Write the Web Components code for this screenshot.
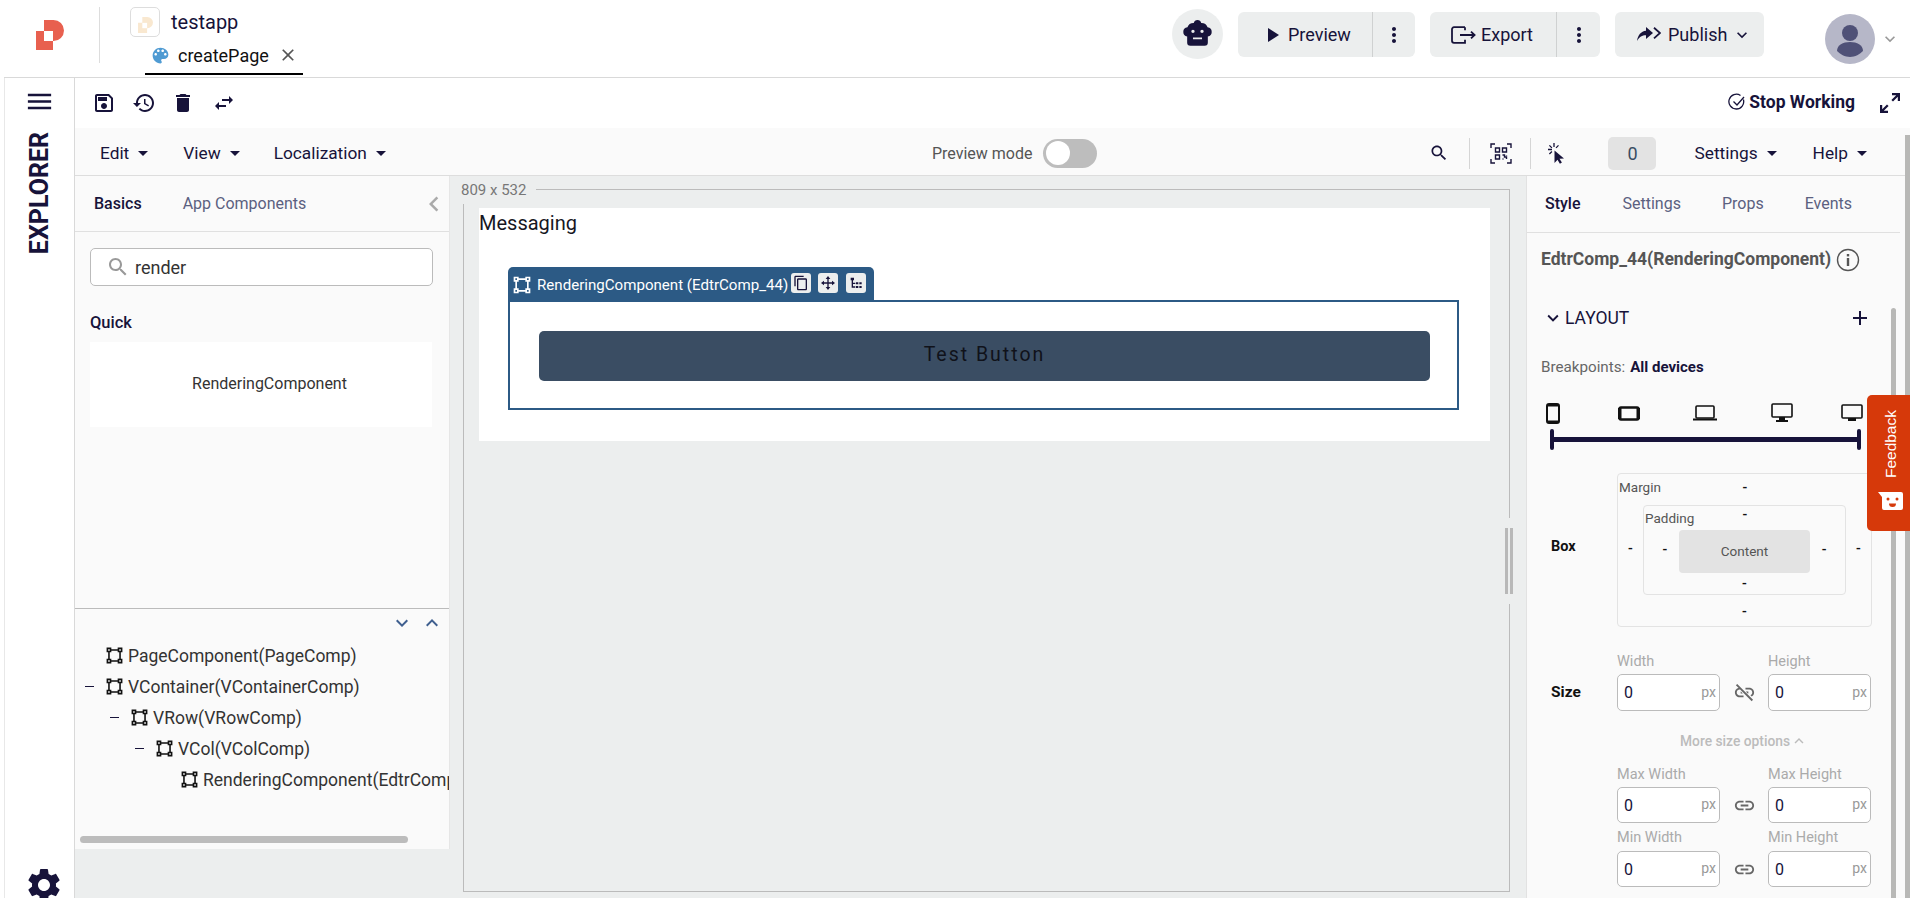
<!DOCTYPE html>
<html lang="en"><head><meta charset="utf-8"><title>testapp</title>
<style>
html,body{margin:0;padding:0;height:898px;overflow:hidden;background:#fff;font-family:Roboto,"Liberation Sans",sans-serif;color:#17133a}
</style></head>
<body>
<app-shell></app-shell>
<script>
const P={
save:'M17 3H5c-1.11 0-2 .9-2 2v14c0 1.1.89 2 2 2h14c1.1 0 2-.9 2-2V7l-4-4zm2 16H5V5h11.17L19 7.83V19zm-7-7c-1.66 0-3 1.34-3 3s1.34 3 3 3 3-1.34 3-3-1.34-3-3-3zM6 6h9v4H6z',
history:'M13 3c-4.97 0-9 4.03-9 9H1l3.89 3.89.07.14L9 12H6c0-3.87 3.13-7 7-7s7 3.13 7 7-3.13 7-7 7c-1.93 0-3.68-.79-4.94-2.06l-1.42 1.42C8.27 19.99 10.51 21 13 21c4.97 0 9-4.03 9-9s-4.03-9-9-9zm-1 5v5l4.28 2.54.72-1.21-3.5-2.08V8H12z',
del:'M6 19c0 1.1.9 2 2 2h8c1.1 0 2-.9 2-2V7H6v12zM19 4h-3.5l-1-1h-5l-1 1H5v2h14V4z',
swap:'M6.99 11L3 15l3.99 4v-3H14v-2H6.99v-3zM21 9l-3.99-4v3H10v2h7.01v3L21 9z',
menu:'M3 18h18v-2H3v2zm0-5h18v-2H3v2zm0-7v2h18V6H3z',
gear:'M19.14 12.94c.04-.3.06-.61.06-.94 0-.32-.02-.64-.07-.94l2.03-1.58c.18-.14.23-.41.12-.61l-1.92-3.32c-.12-.22-.37-.29-.59-.22l-2.39.96c-.5-.38-1.03-.7-1.62-.94l-.36-2.54c-.04-.24-.24-.41-.48-.41h-3.84c-.24 0-.43.17-.47.41l-.36 2.54c-.59.24-1.13.57-1.62.94l-2.39-.96c-.22-.08-.47 0-.59.22L2.74 8.87c-.12.21-.08.47.12.61l2.03 1.58c-.05.3-.09.63-.09.94s.02.64.07.94l-2.03 1.58c-.18.14-.23.41-.12.61l1.92 3.32c.12.22.37.29.59.22l2.39-.96c.5.38 1.03.7 1.62.94l.36 2.54c.05.24.24.41.48.41h3.84c.24 0 .44-.17.47-.41l.36-2.54c.59-.24 1.13-.56 1.62-.94l2.39.96c.22.08.47 0 .59-.22l1.92-3.32c.12-.22.07-.47-.12-.61l-2.01-1.58zM12 15.6c-1.98 0-3.6-1.62-3.6-3.6s1.62-3.6 3.6-3.6 3.6 1.62 3.6 3.6-1.62 3.6-3.6 3.6z',
search:'M15.5 14h-.79l-.28-.27C15.41 12.59 16 11.11 16 9.5 16 5.91 13.09 3 9.5 3S3 5.91 3 9.5 5.91 16 9.5 16c1.61 0 3.09-.59 4.23-1.57l.27.28v.79l5 4.99L20.49 19l-4.99-5zm-6 0C7.01 14 5 11.99 5 9.5S7.01 5 9.5 5 14 7.01 14 9.5 11.99 14 9.5 14z',
play:'M8 5v14l11-7z',
more:'M12 8c1.1 0 2-.9 2-2s-.9-2-2-2-2 .9-2 2 .9 2 2 2zm0 2c-1.1 0-2 .9-2 2s.9 2 2 2 2-.9 2-2-.9-2-2-2zm0 6c-1.1 0-2 .9-2 2s.9 2 2 2 2-.9 2-2-.9-2-2-2z',
palette:'M12 3c-4.97 0-9 4.03-9 9s4.03 9 9 9c.83 0 1.5-.67 1.5-1.5 0-.39-.15-.74-.39-1.01-.23-.26-.38-.61-.38-.99 0-.83.67-1.5 1.5-1.5H16c2.76 0 5-2.24 5-5 0-4.42-4.03-8-9-8zm-5.5 9c-.83 0-1.5-.67-1.5-1.5S5.67 9 6.5 9 8 9.67 8 10.5 7.33 12 6.5 12zm3-4C8.67 8 8 7.33 8 6.5S8.67 5 9.5 5s1.5.67 1.5 1.5S10.33 8 9.5 8zm5 0c-.83 0-1.5-.67-1.5-1.5S13.67 5 14.5 5s1.5.67 1.5 1.5S15.33 8 14.5 8zm3 4c-.83 0-1.5-.67-1.5-1.5S16.67 9 17.5 9s1.5.67 1.5 1.5-.67 1.5-1.5 1.5z',
close:'M19 6.41L17.59 5 12 10.59 6.41 5 5 6.41 10.59 12 5 17.59 6.41 19 12 13.41 17.59 19 19 17.59 13.41 12z',
link:'M3.9 12c0-1.71 1.39-3.1 3.1-3.1h4V7H7c-2.76 0-5 2.24-5 5s2.24 5 5 5h4v-1.9H7c-1.71 0-3.1-1.39-3.1-3.1zM8 13h8v-2H8v2zm9-6h-4v1.9h4c1.71 0 3.1 1.39 3.1 3.1s-1.39 3.1-3.1 3.1h-4V17h4c2.76 0 5-2.24 5-5s-2.24-5-5-5z',
linkoff:'M3.9 12c0-1.71 1.39-3.1 3.1-3.1h1.5L6.6 7H7c-2.76 0-5 2.24-5 5s2.24 5 5 5h4v-1.9H7c-1.71 0-3.1-1.39-3.1-3.1zM17 7h-4v1.9h4c1.71 0 3.1 1.39 3.1 3.1 0 1.3-.8 2.4-1.9 2.86l1.4 1.4C21 15.4 22 13.8 22 12c0-2.76-2.24-5-5-5zM4.4 3.1L3 4.5l16.5 16.5 1.4-1.4zM8 11v2h2.2l-2-2zM16 11h-2.6l2 2h.6z',
vsq:'M2,2H8V4H16V2H22V8H20V16H22V22H16V20H8V22H2V16H4V8H2V2M16,8V6H8V8H6V16H8V18H16V16H18V8H16M4,4V6H6V4H4M18,4V6H20V4H18M4,18V20H6V18H4M18,18V20H20V18H18Z',
down:'M7.41 8.59L12 13.17l4.59-4.58L18 10l-6 6-6-6z',
up:'M7.41 15.41L12 10.83l4.59 4.58L18 14l-6-6-6 6z',
left:'M15.41 7.41L14 6l-6 6 6 6 1.41-1.41L10.83 12z',
plus:'M19 13h-6v6h-2v-6H5v-2h6V5h2v6h6v2z',
copy:'M16 1H4c-1.1 0-2 .9-2 2v14h2V3h12V1zm3 4H8c-1.1 0-2 .9-2 2v14c0 1.1.9 2 2 2h11c1.1 0 2-.9 2-2V7c0-1.1-.9-2-2-2zm0 16H8V7h11v14z',
move:'M11 6h2v5h5V8.500L22.500 12 18 15.500V13h-5v5h2.500L12 22.500 8.500 18H11v-5H6v2.500L1.500 12 6 8.500V11h5V6H8.500L12 1.500 15.500 6H13v0z',
tree:'M4 4h5v4H4zM5.500 8h2v11h-2zM7 11.500h4v2H7zM7 17h4v2H7zM12 11h3.500v3H12zM17 11h3.500v3H17zM12 16.500h3.500v3H12zM17 16.500h3.500v3H17z',
robot:'M12 1.500a3 3 0 0 0-2.900 2.300H9A5 5 0 0 0 4.200 7.200 3.600 3.600 0 0 0 1 10.800a3.600 3.600 0 0 0 3 3.500V19a2.500 2.500 0 0 0 2.500 2.500h11A2.500 2.500 0 0 0 20 19v-4.700a3.600 3.600 0 0 0 3-3.500 3.600 3.600 0 0 0-3.200-3.600A5 5 0 0 0 15 3.800h-.1A3 3 0 0 0 12 1.500zM8.500 9a1.300 1.300 0 1 1 0 2.600 1.300 1.300 0 0 1 0-2.600zm7 0a1.300 1.300 0 1 1 0 2.600 1.300 1.300 0 0 1 0-2.600zM8.500 15h7v1.400h-7z',
};
class XIcon extends HTMLElement{
 connectedCallback(){
  if(this.shadowRoot)return;
  const s=this.getAttribute('size')||24,c=this.getAttribute('color')||'currentColor',n=this.getAttribute('name');
  const r=this.attachShadow({mode:'open'});
  r.innerHTML=`<style>:host{display:inline-flex;flex:none;width:${s}px;height:${s}px}svg{display:block;width:100%;height:100%}</style><svg viewBox="0 0 24 24" fill="${c}"><path d="${P[n]||''}"/></svg>`;
 }
}
customElements.define('x-icon',XIcon);
function def(name,css,html){
 customElements.define(name,class extends HTMLElement{
  connectedCallback(){
   if(this.shadowRoot)return;
   const r=this.attachShadow({mode:'open'});
   const h=typeof html==='function'?html(this):html;
   r.innerHTML=`<style>${css}</style>${h}`;
  }
 });
}
const LOGO=(a,b)=>`<svg viewBox="0 0 28 30" width="100%" height="100%"><path fill="${a}" d="M8 0h9.500a10.500 10.500 0 0 1 0 21H17v9H0V11h8z"/><rect fill="${b}" x="8" y="11" width="9" height="10"/></svg>`;
const caret=`<svg width="10" height="5" viewBox="0 0 10 5" style="display:block;flex:none"><path d="M0 0h10L5 5z" fill="currentColor"/></svg>`;

def('split-btn',`:host{display:flex;height:45px;background:#eceeee;border-radius:6px;font-size:18px;color:#17133a;align-items:stretch;flex:none;margin-top:2px}
.m{display:flex;align-items:center;flex:none;box-sizing:border-box}
.d{width:1px;background:#cfd1d1;flex:none}.k{display:flex;align-items:center;justify-content:center;flex:1}`,
 e=>`<div class="m" style="width:${e.getAttribute('main')}px;padding-left:${e.getAttribute('pad')}px"><slot></slot></div><div class="d"></div><div class="k"><x-icon name="more" size="24"></x-icon></div>`);

def('top-bar',`:host{display:flex;height:77px;border-bottom:1px solid #d9d9d9;align-items:stretch;background:#fff}
.logo{width:28px;height:30px;margin:20px 0 0 32px;flex:none}
.div{width:1px;height:56px;background:#ddd;margin:7px 0 0 35px;flex:none}
.app{margin-left:30px;padding-top:7px;display:flex;flex-direction:column}
.r1{display:flex;align-items:center;height:30px;gap:11px;font-size:20px}
.ai{width:28px;height:28px;border:1px solid #ddd;border-radius:5px;display:flex;align-items:center;justify-content:center}
.ai div{width:15px;height:16px}
.tab{margin-left:15px;width:158px;height:38px;box-sizing:border-box;border-bottom:2px solid #000;display:flex;align-items:center;font-size:18px;color:#111;padding-left:5px}
.tab span{margin-left:7px}
.tab .x{margin-left:9px}
.right{margin-left:auto;display:flex;align-items:center;padding:0 10px 10px 0;gap:15px}
.bot{width:51px;height:50px;border-radius:50%;background:#eceeee;display:flex;align-items:center;justify-content:center;flex:none}
.ava{width:50px;height:50px;border-radius:50%;background:#b6b7c8;margin-left:46px;flex:none}
.ch{margin-left:-10px}
.pub{display:flex;align-items:center;width:149px;height:45px;box-sizing:border-box;padding-left:22px;background:#eceeee;border-radius:6px;font-size:18px;flex:none;margin-top:2px}
`,`<div class="logo">${LOGO('#e8604f','#fff')}</div><div class="div"></div>
<div class="app"><div class="r1"><div class="ai"><div>${LOGO('#f9e8d0','#fff')}</div></div><span>testapp</span></div>
<div class="tab"><x-icon name="palette" size="21" color="#4f9bd3"></x-icon><span>createPage</span><x-icon class="x" name="close" size="20" color="#555"></x-icon></div></div>
<div class="right"><div class="bot"><x-icon name="robot" size="31"></x-icon></div>
<split-btn style="width:177px" main="134" pad="22"><x-icon name="play" size="24"></x-icon><span style="margin-left:4px">Preview</span></split-btn>
<split-btn style="width:170px" main="126" pad="21"><svg width="26" height="18" viewBox="0 0 26 18" fill="none" stroke="#17133a" stroke-width="1.800"><path d="M14 1.200H3a2 2 0 0 0-2 2v11.600a2 2 0 0 0 2 2h11v-3M14 4.200v-3M9 9h14M20 5.600L23.600 9 20 12.400"/></svg><span style="margin-left:4px">Export</span></split-btn>
<div class="pub"><svg width="24" height="15" viewBox="0 0 24 15"><path fill="#17133a" d="M9 0l7 6-7 6V8.200C5 8.200 2.600 9.600 0 14 .9 8 4 4.400 9 3.800z"/><path fill="none" stroke="#17133a" stroke-width="1.800" d="M17 .8L23 6l-6 5.400"/></svg><span style="margin-left:7px">Publish</span><x-icon name="down" size="20" style="margin-left:5px"></x-icon></div>
<div class="ava" style="margin-top:10px"><svg viewBox="0 0 50 50" width="50" height="50"><circle cx="25" cy="19" r="8" fill="#4f5177"/><path d="M12 37c0-6 6-9 13-9s13 3 13 9c-3 3-8 6-13 6s-10-3-13-6z" fill="#4f5177"/></svg></div>
<x-icon class="ch" name="down" size="20" color="#999" style="margin-top:10px"></x-icon></div>`);

def('left-rail',`:host{display:flex;flex-direction:column;align-items:center;width:69px;border-right:1px solid #d9d9d9;height:820px;flex:none;background:#fff;overflow:hidden;box-sizing:content-box}
.m{margin-top:8px}
.t{writing-mode:vertical-rl;transform:rotate(180deg);font-size:25px;font-weight:700;margin-top:15px;line-height:22px;color:#17133a}
.g{margin-top:auto;margin-bottom:-7px;margin-left:9px}`,
`<x-icon class="m" name="menu" size="31"></x-icon><div class="t">EXPLORER</div><x-icon class="g" name="gear" size="40"></x-icon>`);

def('tool-bar',`:host{display:flex;align-items:center;height:50px;background:#fff;padding-left:17px;box-sizing:border-box}
x-icon{margin-right:16px}
.s{margin:-2px 15px 0 auto;display:flex;align-items:center;font-size:17.500px;font-weight:700;gap:3px}
.s svg{display:block}`,
`<x-icon name="save"></x-icon><x-icon name="history" style="margin-right:15px"></x-icon><x-icon name="del"></x-icon><x-icon name="swap" style="margin-left:1px"></x-icon>
<div class="s"><svg width="18" height="18" viewBox="0 0 18 18" fill="none" stroke="#17133a" stroke-width="1.300"><path d="M15.400 6.500A7.400 7.400 0 1 1 12.500 2.500"/><path d="M5.500 8.500L9 12l7-8"/></svg><span>Stop Working</span></div>
<svg width="20" height="20" viewBox="0 0 20 20" style="margin-right:10px;margin-left:10px"><path fill="#17133a" d="M12 0h8v8h-2.200V3.800L13 8.600 11.400 7 16.200 2.200H12zM0 12h2.200v4.200L7 11.400 8.600 13 3.800 17.800H8V20H0z"/></svg>`);

def('menu-bar',`:host{display:flex;align-items:center;height:48px;background:#fafafa;border-bottom:1px solid #ddd;box-sizing:border-box;padding:3px 0 0 25px;font-size:17.300px;color:#17133a}
.i{display:flex;align-items:center;gap:9px}
.pm{margin-left:546px;font-size:16px;color:#555}
.tg{width:54px;height:29px;border-radius:15px;background:#bdbdbd;margin-left:11px;display:flex;align-items:center;padding-left:3px;box-sizing:border-box}
.tg i{display:block;width:24px;height:24px;border-radius:50%;background:#fff}
.r{margin-left:auto;display:flex;align-items:center;margin-right:43px}
.v{width:1px;height:31px;background:#d5d5d5}
.z{width:48px;height:33px;background:#e3e3e3;border-radius:5px;display:flex;align-items:center;justify-content:center;font-size:18px;color:#3a4d63}`,
`<div class="i">Edit ${caret}</div><div class="i" style="margin-left:35px">View ${caret}</div><div class="i" style="margin-left:34px">Localization ${caret}</div>
<div class="pm">Preview mode</div><div class="tg"><i></i></div>
<div class="r"><x-icon name="search" size="20" style="margin-right:20px"></x-icon><div class="v"></div>
<svg width="22" height="21" viewBox="0 0 22 21" style="margin:0 18px 0 20px" fill="none" stroke="#17133a" stroke-width="1.400"><path d="M1 5V1h4M17 1h4v4M21 16v4h-4M5 20H1v-4"/><path d="M5.500 5h4v4h-4zM12.500 5h4v4h-4zM5.500 12h4v4h-4z"/><path d="M12.500 12h2v2h2v2M16.500 12v.5M12.500 16h1"/></svg>
<div class="v"></div><svg width="18" height="21" viewBox="0 0 18 21" style="margin-left:16px" fill="none" stroke="#17133a" stroke-width="1.300"><path d="M7 0v4M1 6.500h4M2.400 2.400l2.500 2.500M11.500 2.400L9 4.900M2.400 11l2.500-2.500"/><path fill="#17133a" stroke="none" d="M7.500 7.500V20l3-3.300 2.400 4 2-1.200-2.400-3.800 4.500-.3z"/></svg>
<div class="z" style="margin-left:43px">0</div><div class="i" style="margin-left:38px">Settings ${caret}</div><div class="i" style="margin-left:36px">Help ${caret}</div></div>`);

def('tree-row',`:host{display:flex;align-items:center;height:31px;font-size:17.500px;color:#333;white-space:nowrap;flex:none}
.d{width:9px;height:1.500px;background:#17133a;flex:none;margin-right:11px}
x-icon{margin-right:4px;color:#111}`,
e=>{const i=+e.getAttribute('lvl');return `<div style="width:${i*25+30}px;flex:none;display:flex;justify-content:flex-end">${e.hasAttribute('dash')?'<div class="d"></div>':''}</div><x-icon name="vsq" size="19"></x-icon><slot></slot>`});

def('left-panel',`:host{display:flex;flex-direction:column;width:375px;flex:none;height:722px;box-sizing:border-box}
.w{background:#fafafa;height:673px;display:flex;flex-direction:column;overflow:hidden;border-right:1px solid #e6e6e6}
.tabs{height:56px;border-bottom:1px solid #e0e0e0;display:flex;align-items:center;padding-left:19px;font-size:16px;flex:none;box-sizing:border-box}
.tabs b{color:#17133a;font-weight:500}.tabs span{margin-left:41px;color:#5b6080}
.tabs x-icon{margin-left:auto;margin-right:0}
.srch{margin:16px 16px 0 15px;height:38px;box-sizing:border-box;border:1px solid #bbb;border-radius:5px;background:#fff;display:flex;align-items:center;padding-left:15px;font-size:18px;color:#333;flex:none}
.q{margin:26px 0 0 15px;font-size:16.500px;color:#17133a;font-weight:500;line-height:22px;flex:none}
.card{margin:8px 17px 0 15px;height:85px;background:#fff;display:flex;align-items:center;justify-content:center;font-size:16px;color:#333;flex:none;padding:0 0 2px 17px;box-sizing:border-box}
.sp{height:181px;flex:none;border-bottom:1px solid #bbb}
.ar{display:flex;justify-content:flex-end;gap:6px;padding:2px 5px 0 0;height:26px;box-sizing:border-box;flex:none;color:#3f5f8f}
.tree{height:193px;margin-top:5px;flex:none;overflow:hidden}
.sb{height:7px;border-radius:4px;background:#bcbcbc;margin:3px 0 6px 5px;width:328px;flex:none}`,
`<div class="w"><div class="tabs"><b>Basics</b><span>App Components</span><x-icon name="left" size="30" color="#aaa"></x-icon></div>
<div class="srch"><x-icon name="search" size="24" color="#999"></x-icon><span style="margin-left:5px">render</span></div>
<div class="q">Quick</div><div class="card">RenderingComponent</div><div class="sp"></div>
<div class="ar"><x-icon name="down" size="24"></x-icon><x-icon name="up" size="24"></x-icon></div>
<div class="tree"><tree-row lvl="0">PageComponent(PageComp)</tree-row><tree-row lvl="0" dash>VContainer(VContainerComp)</tree-row><tree-row lvl="1" dash>VRow(VRowComp)</tree-row><tree-row lvl="2" dash>VCol(VColComp)</tree-row><tree-row lvl="3">RenderingComponent(EdtrComp_44)</tree-row></div>
<div class="sb"></div></div>`);

def('canvas-area',`:host{display:flex;flex-direction:column;flex:none;width:1076px;height:722px;background:#eceeee}
.hd{display:flex;height:28px;padding:0 16px 0 11px;flex:none}
.hd span{font-size:15px;color:#777;line-height:29px}
.hd i{display:block;flex:1;margin-left:10px;height:15px;align-self:flex-end;box-sizing:border-box;border-top:1px solid #bbb;border-right:1px solid #bbb}
.fr{position:relative;margin-left:13px;width:1047px;height:688px;box-sizing:border-box;border:1px solid #bbb;border-top:0;padding:4px 19px 0 15px}
.cv{background:#fff;height:233px;box-sizing:border-box}
.cv h1{margin:0;font-weight:400;font-size:20px;line-height:30px;color:#17171f}
.cw{margin:29px 31px 0 29px}
.tb{position:relative;z-index:1;width:366px;height:35px;margin-bottom:-2px;background:#2c5a85;border-radius:5px 5px 0 0;display:flex;align-items:center;padding-left:4px;box-sizing:border-box;color:#fff;font-size:15.100px;white-space:nowrap}
.tb span{margin-left:5px}
.tb u{display:flex;align-items:center;justify-content:center;width:20px;height:20px;background:#eceeee;border-radius:3px;color:#17133a;text-decoration:none;flex:none;margin-top:-3px}
.bx{border:2px solid #2c5a85;padding:29px 27px 27px 29px}
.bt{height:50px;box-sizing:border-box;padding-bottom:3px;border-radius:5px;background:#3a4d63;display:flex;align-items:center;justify-content:center;font-size:19.500px;letter-spacing:2px;color:#10121a}
.hn{position:absolute;right:-5px;top:314px;height:86px;width:10px;background:#eceeee;display:flex;gap:2px;align-items:center;justify-content:center}
.hn i{display:block;width:3px;height:66px;background:#b8b8b8}`,
`<div class="hd"><span>809 x 532</span><i></i></div>
<div class="fr"><div class="cv"><h1>Messaging</h1><div class="cw">
<div class="tb"><x-icon name="vsq" size="20"></x-icon><span>RenderingComponent (EdtrComp_44)</span><u style="margin-left:3px"><x-icon name="copy" size="16"></x-icon></u><u style="margin-left:7px"><x-icon name="move" size="16"></x-icon></u><u style="margin-left:8px"><x-icon name="tree" size="16"></x-icon></u></div>
<div class="bx"><div class="bt">Test Button</div></div></div></div>
<div class="hn"><i></i><i></i></div></div>`);

def('box-model',`:host{display:block;width:255px;height:154px;box-sizing:border-box;border:1px solid #e3e3e3;border-radius:4px;font-size:13.500px;color:#555;flex:none}
.top{display:grid;grid-template-columns:1fr auto 1fr;height:31px;align-items:center;padding:0 0 6px 1px;box-sizing:border-box}
.dash{color:#111;font-size:14px;line-height:14px;font-weight:500}
.mid{display:flex;align-items:flex-start}
.side{width:25px;text-align:center;margin-top:36px}
.pad{width:203px;height:90px;box-sizing:border-box;border:1px solid #e3e3e3;border-radius:4px}
.top2{height:24px;display:grid;grid-template-columns:1fr auto 1fr;padding-left:1px;align-items:start;padding-top:4px;box-sizing:border-box;}
.in{display:flex;align-items:flex-start}
.c{width:132px;height:43px;padding-bottom:2px;box-sizing:border-box;background:#e3e3e3;border-radius:4px;display:flex;align-items:center;justify-content:center;font-size:13.500px;color:#555}
.s2{width:35px;text-align:center;margin-top:12px;box-sizing:border-box}
.b1{text-align:center;height:20px;margin-top:3px}.b2{text-align:center;margin-top:9px}`,
`<div class="top"><span>Margin</span><span class="dash">-</span><span></span></div>
<div class="mid"><div class="side dash">-</div><div class="pad"><div class="top2"><span>Padding</span><span class="dash" style="margin-top:-3px">-</span><span></span></div>
<div class="in"><div class="s2 dash" style="padding-left:7px">-</div><div class="c">Content</div><div class="s2 dash" style="padding-right:7px">-</div></div><div class="b1 dash">-</div></div><div class="side dash">-</div></div>
<div class="b2 dash">-</div>`);

def('num-field',`:host{display:flex;align-items:center;box-sizing:border-box;width:103px;border:1px solid #bbb;border-radius:5px;background:#fff;font-size:16px;color:#17133a;padding:0 3px 0 6px;justify-content:space-between}
span{font-size:14px;color:#999;margin-top:-2px}`,`0<span>px</span>`);

def('size-row',`:host{display:flex;flex:none}
.sd{width:66px;flex:none;font-size:15.500px;font-weight:700;color:#111;align-self:flex-end;box-sizing:border-box;}
.g{display:grid;grid-template-columns:103px 48px 103px;grid-auto-rows:auto}
.l{font-size:14.500px;color:#aaa;display:flex;align-items:center}
.ic{display:flex;align-items:center;justify-content:center;color:#666}`,
e=>{const h=e.getAttribute('h'),t=e.getAttribute('lh');return `<div class="sd" style="height:${h}px;line-height:${h}px">${e.getAttribute('side')||''}</div><div class="g"><div class="l" style="height:${t}px">${e.getAttribute('a')}</div><div></div><div class="l" style="height:${t}px">${e.getAttribute('b')}</div><num-field style="height:${h}px"></num-field><div class="ic"><x-icon name="${e.getAttribute('ic')}" size="23"></x-icon></div><num-field style="height:${h}px"></num-field></div>`});

const dev={
phone:`<svg width="14" height="21" viewBox="0 0 14 21" style="display:block"><rect x="1" y="1" width="12" height="19" rx="2" fill="none" stroke="#111" stroke-width="2"/><rect x="1" y="1" width="12" height="2.500" fill="#111"/><rect x="1" y="17.500" width="12" height="2.500" fill="#111"/></svg>`,
tab:`<svg width="22" height="15" viewBox="0 0 22 15" style="display:block"><rect x="1.500" y="1.500" width="19" height="12" rx="1.500" fill="none" stroke="#111" stroke-width="2.400"/><rect x="0" y="2" width="3.500" height="11" fill="#111"/><rect x="18.500" y="2" width="3.500" height="11" fill="#111"/></svg>`,
lap:`<svg width="24" height="16" viewBox="0 0 24 16" style="display:block"><rect x="3" y="1" width="18" height="12" rx="1" fill="none" stroke="#111" stroke-width="1.600"/><rect x="0" y="13.500" width="24" height="2" fill="#111"/></svg>`,
mon:`<svg width="22" height="20" viewBox="0 0 22 20" style="display:block"><rect x="1" y="1" width="20" height="13" rx="1" fill="none" stroke="#111" stroke-width="1.600"/><rect x="8" y="14" width="6" height="3" fill="#111"/><rect x="5" y="17" width="12" height="2" fill="#111"/></svg>`,
mon2:`<svg width="22" height="18" viewBox="0 0 22 18" style="display:block"><rect x="1" y="1" width="20" height="13" rx="1" fill="none" stroke="#111" stroke-width="1.600"/><rect x="7" y="14" width="8" height="3" fill="#111"/></svg>`};

def('right-panel',`:host{display:block;position:relative;width:384px;height:722px;flex:none;background:#fafafa;border-left:1px solid #e2e2e2;box-sizing:border-box;overflow:hidden}
.tabs{width:373px;height:57px;border-bottom:1px solid #e0e0e0;display:flex;align-items:center;box-sizing:border-box;font-size:16px;color:#5b6080;padding:0 0 2px 18px}
.tabs b{font-weight:500;color:#17133a}
.ti{display:flex;align-items:center;height:52px;padding-left:14px;font-size:17.500px;font-weight:700;color:#555;white-space:nowrap}
.ti svg{margin:2px 0 0 5px}
.ly{display:flex;align-items:center;height:64px;padding:2px 0 0 15px;box-sizing:border-box;font-size:17.500px;color:#17133a;width:345px}
.ly span{margin-left:1px}.ly x-icon:last-child{margin-left:auto}
.bp{padding:2px 0 0 14px;box-sizing:border-box;font-size:15.200px;color:#666;height:34px;display:flex;align-items:center}
.bp b{color:#17133a;font-weight:700;margin-left:5px;font-size:15px}
.dv{display:flex;align-items:center;height:24px;margin-top:18px}
.tr{display:flex;align-items:center;height:21px;width:311px;margin:4px 0 0 23px}
.tr i{display:block;width:4px;height:21px;border-radius:2px;background:#17133a;flex:none}.tr u{display:block;flex:1;height:5px;background:#17133a}
.bxr{display:flex;margin-top:23px;align-items:center;padding-left:24px}
.bxr b{width:66px;font-size:14.500px;color:#111;font-weight:700;margin-top:-8px}
.mo{margin-left:129px;height:50px;padding-top:9px;box-sizing:border-box;font-size:13.800px;font-weight:500;color:#bcbcbc;display:flex;align-items:center;gap:0;width:200px}`,
`<div class="tabs"><b>Style</b><span style="margin-left:42px">Settings</span><span style="margin-left:41px">Props</span><span style="margin-left:41px">Events</span></div>
<div class="ti">EdtrComp_44(RenderingComponent)<svg width="24" height="24" viewBox="0 0 24 24"><circle cx="12" cy="12" r="10.500" fill="none" stroke="#555" stroke-width="1.400"/><rect x="10.800" y="10" width="2.400" height="8" fill="#555"/><rect x="10.800" y="6" width="2.400" height="2.400" fill="#555"/></svg></div>
<div class="ly"><x-icon name="down" size="22"></x-icon><span>LAYOUT</span><x-icon name="plus" size="24"></x-icon></div>
<div class="bp">Breakpoints: <b>All devices</b></div>
<div class="dv"><span style="margin-left:19px">${dev.phone}</span><span style="margin-left:58px">${dev.tab}</span><span style="margin-left:53px">${dev.lap}</span><span style="margin-left:54px">${dev.mon}</span><span style="margin-left:48px">${dev.mon2}</span></div>
<div class="tr"><i></i><u></u><i></i></div>
<div class="bxr"><b>Box</b><box-model></box-model></div>
<div style="padding-left:24px;margin-top:21px"><size-row side="Size" a="Width" b="Height" ic="linkoff" h="37" lh="26"></size-row>
<div class="mo">More size options <x-icon name="up" size="18"></x-icon></div>
<size-row a="Max Width" b="Max Height" ic="link" h="36" lh="26"></size-row><size-row a="Min Width" b="Min Height" ic="link" h="36" lh="28"></size-row></div>`);

def('feedback-tab',`:host{position:absolute;right:0;top:395px;width:43px;height:136px;background:#d6390a;border-radius:5px 0 0 5px;display:flex;flex-direction:column;align-items:center;color:#fff;z-index:5}
.t{writing-mode:vertical-rl;transform:rotate(180deg);font-family:"Liberation Sans",sans-serif;font-size:15.500px;margin-top:15px;line-height:16px;margin-left:4px}
svg{margin-top:13px;margin-left:4px}`,
`<div class="t">Feedback</div><svg width="25" height="20" viewBox="0 0 25 20"><path fill="#fff" d="M0 1h23a2 2 0 0 1 2 2v14a2 2 0 0 1-2 2H6a2 2 0 0 1-2-2V6z"/><circle cx="10" cy="8" r="1.500" fill="#d6390a"/><circle cx="19" cy="8" r="1.500" fill="#d6390a"/><path d="M11 12.500h7a3.500 3.500 0 0 1-7 0z" fill="#d6390a"/></svg>`);

def('app-shell',`:host{display:flex;flex-direction:column;position:relative;width:1910px;height:898px;box-sizing:border-box;padding-left:4px;overflow:hidden;background:#fff}
.bd{display:flex;height:820px;border-left:1px solid #e8e8e8}
.mn{display:flex;flex-direction:column;flex:1;min-width:0}
.pn{display:flex;height:722px;background:#eceeee}
.page-sb{position:absolute;right:0;top:135px;width:5px;height:763px;background:#b8b8b6}
.sb2{position:absolute;left:1891px;top:308px;width:5px;height:590px;border-radius:3px 3px 0 0;background:#b8b8b6;z-index:2}`,
`<top-bar></top-bar><div class="bd"><left-rail></left-rail><div class="mn"><tool-bar></tool-bar><menu-bar></menu-bar><div class="pn"><left-panel></left-panel><canvas-area></canvas-area><right-panel></right-panel></div></div></div>
<div class="sb2"></div><div class="page-sb"></div><feedback-tab></feedback-tab>`);
</script>
</body></html>
